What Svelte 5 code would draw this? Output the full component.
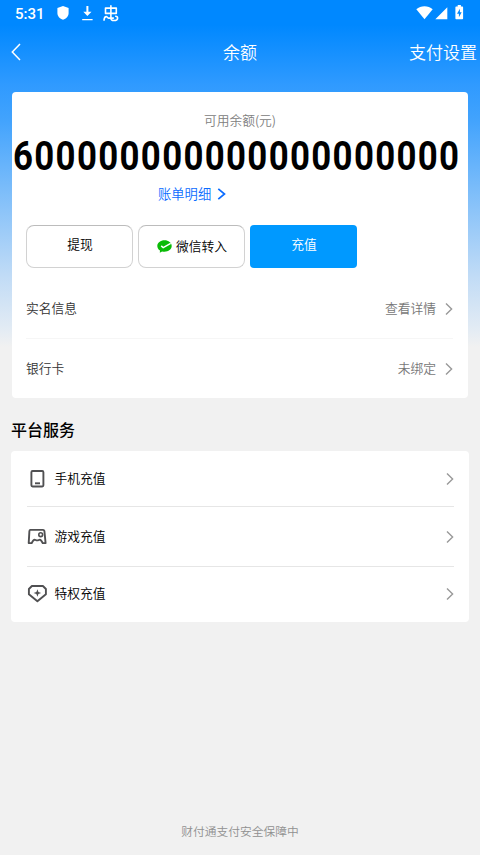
<script>
  const zeros = '0'.repeat(20);
  const amount = '6' + zeros;
  const info = [
    { label: '实名信息', value: '查看详情' },
    { label: '银行卡', value: '未绑定' }
  ];
  const services = [
    { icon: 'phone', label: '手机充值' },
    { icon: 'game', label: '游戏充值' },
    { icon: 'vip', label: '特权充值' }
  ];
</script>

{#snippet chevron()}
  <svg class="chev" width="8" height="12" viewBox="0 0 8 12" fill="none" stroke="currentColor" stroke-width="1.4"><path d="M1 .6 6.600 6 1 11.400" /></svg>
{/snippet}

<div class="page">
  <div class="status">
    <span class="time">5:31</span>
    <svg class="shield" width="12" height="14" viewBox="0 0 12 14"><path fill="#fff" d="M6 0 11.600 2.100V7c0 3.100-2.300 5.700-5.600 6.700C2.700 12.700.4 10.100.4 7V2.100z" /></svg>
    <svg class="down" width="11" height="15" viewBox="0 0 11 15"><path fill="#fff" d="M4.400 0h2v5.700H9.500L5.400 10 1.300 5.700h3.100zM.2 13h10.400v1.300H.2z" /></svg>
    <svg class="bug" width="16" height="17" viewBox="0 0 16 17" fill="none" stroke="#fff" stroke-width="1.600" stroke-linecap="round" stroke-linejoin="round"><path d="M2.500 3.100h10.800v5.300H2.500zM7.900.8v12.400c0 1.600 1.200 2.300 3 2.300 2.200 0 3.700-.9 3.700-2.300 0-1.100-.8-1.900-1.900-1.900M1 15.200c.2-2.100.9-3.600 2.200-3.600 1.200 0 1.200 1.500 2.200 1.500h5" /></svg>
    <svg class="wifi" width="17" height="14" viewBox="0 0 17 14"><path fill="#fff" d="M.3 3.200C2.600 1.300 5.400.3 8.500.3s5.900 1 8.200 2.900L8.500 13.300z" /></svg>
    <svg class="signal" width="13" height="13" viewBox="0 0 13 13"><path fill="#fff" d="M12.300.3v12H.3z" /></svg>
    <svg class="battery" width="9" height="15" viewBox="0 0 9 15"><path fill="#fff" fill-rule="evenodd" d="M2.700 0h3.200v1.500h1.200c.6 0 1 .4 1 1v10.800c0 .6-.4 1-1 1H1.400c-.6 0-1-.4-1-1V2.500c0-.6.4-1 1-1h1.300zM4.900 3.700 2 8.700h1.900v3.600l2.800-5H4.900z" /></svg>
  </div>

  <header>
    <svg class="back" width="10" height="18" viewBox="0 0 10 18" fill="none" stroke="#fff" stroke-width="1.500"><path d="M9 1 1.300 9 9 17" /></svg>
    <h1>余额</h1>
    <span class="settings">支付设置</span>
  </header>

  <section class="card balance">
    <div class="caption">可用余额(元)</div>
    <div class="amount"><span>{amount}</span></div>
    <div class="detail">账单明细 <svg width="9" height="12" viewBox="0 0 9 12" fill="none" stroke="currentColor" stroke-width="1.700"><path d="M1.300.8 7.500 6l-6.200 5.200" /></svg></div>
    <div class="buttons">
      <button>提现</button>
      <button class="wechat">
        <svg width="15" height="13" viewBox="0 0 15 13"><path fill="#0abb07" d="M7.500.3c4 0 7.200 2.500 7.200 5.700s-3.200 5.700-7.200 5.700c-.9 0-1.700-.1-2.400-.3l-2.300 1.300.2-2.200C1.300 9.500.3 7.900.3 6 .3 2.800 3.500.3 7.500.3" /><path d="m4.200 5.900 2 1.700 7.500-4.200" fill="none" stroke="#fff" stroke-width="1.500" /></svg>微信转入
      </button>
      <button class="primary">充值</button>
    </div>
    <div class="info">
      {#each info as row}
        <div class="row"><span>{row.label}</span><span class="value">{row.value}</span>{@render chevron()}</div>
      {/each}
    </div>
  </section>

  <h2>平台服务</h2>

  <section class="card services">
    {#each services as s}
      <div class="row {s.icon}">
        <svg class="icon" width="20" height="20" viewBox="0 0 20 20" fill="none" stroke="#505052" stroke-width="1.900" stroke-linejoin="round">
          {#if s.icon === 'phone'}
            <rect x="4.400" y="2" width="12" height="15.500" rx="1.200" /><path d="M8 14.300h5" />
          {:else if s.icon === 'game'}
            <path d="M3.300 2.900H16c.8 0 1.200.3 1.400 1.100l1.200 12.100h-2.900c-1-2.200-1.900-3.400-2.900-3.400-.9 0-1.200.7-2.600.7s-1.700-.7-2.600-.7c-1 0-1.900 1.200-2.900 3.400H1.700L2.400 4c.1-.8.5-1.100.9-1.100z" /><circle cx="13.700" cy="7.700" r="1.900" stroke-width="1.600" />
          {:else}
            <path d="M4.900 2h11l3 3v5.200L10.400 17.200 1.900 10.200V5z" /><path fill="#505052" stroke="none" d="m10.400 5.300 1 2.700 2.800 1-2.800 1-1 2.700-1-2.700-2.800-1 2.800-1z" />
          {/if}
        </svg>
        <span>{s.label}</span>{@render chevron()}
      </div>
    {/each}
  </section>

  <footer>财付通支付安全保障中</footer>
</div>

<style>
  .page {
    box-sizing: border-box;
    width: 480px;
    height: 855px;
    overflow: hidden;
    display: flex;
    flex-direction: column;
    font-family: 'Noto Sans CJK SC', sans-serif;
    font-weight: 350;
    font-size: 12.750px;
    line-height: 20px;
    color: #000;
    background: linear-gradient(#0088ff 0, #0088ff 25px, #2f9aff 84px, #42a3fd 120px, #8cc4f9 210px, #c0dbf6 275px, #e2ebf4 328px, #f1f1f1 347px);
  }
  svg { display: block; flex: none; }
  .status {
    height: 27px;
    display: flex;
    align-items: flex-start;
    padding: 0 15px;
    color: #fff;
  }
  .time { font: 500 15px/28px Roboto, sans-serif; width: 42px; }
  .shield { margin-top: 6px; }
  .down { margin: 6px 0 0 13px; }
  .bug { margin: 5px 0 0 10px; }
  .wifi { margin: 6px 0 0 auto; }
  .signal { margin: 7px 0 0 2px; }
  .battery { margin: 5px 1px 0 7px; }
  header {
    height: 65px;
    display: grid;
    grid-template-columns: 1fr auto 1fr;
    align-items: start;
    padding: 0 3px 0 11px;
    box-sizing: border-box;
    color: #fff;
    font-size: 17px;
    line-height: 26px;
  }
  .back { margin-top: 16px; }
  h1 { margin: 12px 0 0 -8px; font: inherit; }
  .settings { justify-self: end; margin-top: 12px; }
  .card { background: #fff; border-radius: 4px; box-sizing: border-box; flex: none; }
  .balance { margin: 0 12px; height: 306px; padding-top: 18px; }
  .caption { text-align: center; color: #808080; }
  .amount { height: 53px; display: flex; padding-left: 1px; }
  .amount span {
    font: 700 40px/54px Roboto, sans-serif;
    letter-spacing: 1.540px;
    transform: scaleX(0.87);
    transform-origin: 0 50%;
    white-space: nowrap;
  }
  .detail {
    display: flex;
    align-items: center;
    gap: 6px;
    padding-left: 146px;
    color: #0b6cff;
    font-size: 13.300px;
    height: 22px;
  }
  .buttons { display: flex; gap: 5px; padding: 20px 14px 0 14.400px; }
  button {
    width: 107px;
    height: 43px;
    box-sizing: border-box;
    border: 1px solid #d2d2d2;
    border-top-color: #bcbcbc;
    border-radius: 8px;
    padding: 0 0 5px;
    background: #fff;
    color: #000;
    font: inherit;
  }
  .wechat { display: flex; align-items: center; justify-content: center; gap: 4px; padding: 0 0 1px; }
  .primary { background: #0099ff; border: 0; border-radius: 4px; color: #fff; }
  .row { display: flex; align-items: center; }
  .row span { position: relative; top: -1px; }
  .chev { color: #999; margin-left: 9px; }
  .info { padding: 11px 15px 0 14px; color: #333; }
  .info .row { height: 59px; }
  .info .row + .row { border-top: 1px solid #f6f6f6; }
  .value { margin-left: auto; color: #777; }
  h2 { margin: 18px 0 0 11px; font-size: 16px; line-height: 26px; font-weight: 500; }
  .services { margin: 9px 11px 0; height: 171px; padding: 0 15px 0 16px; }
  .services .row { height: 55px; }
  .services .game { height: 59px; border: solid #e6e6e6; border-width: 1px 0; }
  .services .vip { height: 53px; }
  .icon { margin-right: 7.500px; }
  .services .chev { margin-left: auto; }
  footer {
    margin: auto 0 14px;
    text-align: center;
    color: #909090;
    font-size: 11.750px;
  }
</style>
